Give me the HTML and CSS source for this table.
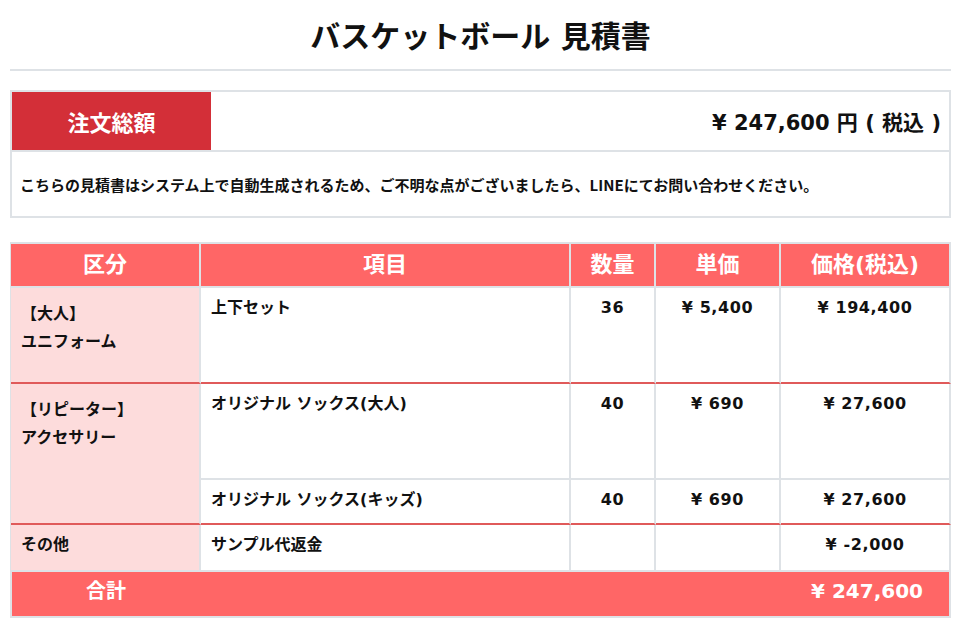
FILE: index.html
```html
<!DOCTYPE html>
<html lang="ja">
<head>
<meta charset="utf-8">
<title>バスケットボール 見積書</title>
<link rel="stylesheet" href="styles.css">
</head>
<body>
<div class="page">
  <h1 class="title">バスケットボール 見積書</h1>
  <div class="divider"></div>

  <div class="summary">
    <div class="summary-top">
      <div class="summary-label">注文総額</div>
      <div class="summary-amount">¥ 247,600 円 ( 税込 )</div>
    </div>
    <div class="summary-note">こちらの見積書はシステム上で自動生成されるため、ご不明な点がございましたら、LINEにてお問い合わせください。</div>
  </div>

  <table class="estimate">
    <thead>
      <tr>
        <th class="c-cat">区分</th>
        <th class="c-item">項目</th>
        <th class="c-qty">数量</th>
        <th class="c-unit">単価</th>
        <th class="c-price">価格(税込)</th>
      </tr>
    </thead>
    <tbody>
      <tr class="row-tall group-end">
        <td class="cat">【大人】<br>ユニフォーム</td>
        <td class="item">上下セット</td>
        <td class="num">36</td>
        <td class="num">¥ 5,400</td>
        <td class="num">¥ 194,400</td>
      </tr>
      <tr class="row-tall">
        <td class="cat cat-end" rowspan="2">【リピーター】<br>アクセサリー</td>
        <td class="item">オリジナル ソックス(大人)</td>
        <td class="num">40</td>
        <td class="num">¥ 690</td>
        <td class="num">¥ 27,600</td>
      </tr>
      <tr class="row-short group-end">
        <td class="item">オリジナル ソックス(キッズ)</td>
        <td class="num">40</td>
        <td class="num">¥ 690</td>
        <td class="num">¥ 27,600</td>
      </tr>
      <tr class="row-other">
        <td class="cat cat-single">その他</td>
        <td class="item">サンプル代返金</td>
        <td class="num"></td>
        <td class="num"></td>
        <td class="num">¥ -2,000</td>
      </tr>
    </tbody>
  </table>

  <div class="total">
    <div class="total-label">合計</div>
    <div class="total-amount">¥ 247,600</div>
  </div>
</div>
</body>
</html>
```

FILE: styles.css
```css
html, body {
  margin: 0;
  padding: 0;
  background: #ffffff;
}

body {
  color: #111111;
  font-family: "DejaVu Sans", "Noto Sans CJK JP", sans-serif;
  font-weight: 700;
}

.page {
  padding: 0 10px;
}

.title {
  margin: 0;
  padding-top: 17px;
  font-size: 30px;
  line-height: 40px;
  font-weight: 700;
  text-align: center;
}

.divider {
  margin-top: 12px;
  height: 2px;
  background: #dee2e6;
}

/* summary box */
.summary {
  margin-top: 19px;
  border: 2px solid #dee2e6;
}

.summary-top {
  display: flex;
  height: 58px;
}

.summary-label {
  width: 199px;
  display: flex;
  align-items: center;
  justify-content: center;
  background: #d32f38;
  color: #ffffff;
  font-size: 22px;
}

.summary-amount {
  flex: 1;
  display: flex;
  align-items: center;
  justify-content: flex-end;
  padding-right: 8px;
  font-size: 21px;
}

.summary-note {
  border-top: 2px solid #dee2e6;
  height: 64px;
  display: flex;
  align-items: center;
  padding: 0 8px;
  font-family: "Noto Sans CJK JP", "DejaVu Sans", sans-serif;
  font-size: 15px;
}

/* estimate table */
.estimate {
  margin-top: 24px;
  width: 941px;
  table-layout: fixed;
  border-collapse: separate;
  border-spacing: 0;
  border-top: 2px solid #dee2e6;
  border-left: 1px solid #dee2e6;
}

.estimate th,
.estimate td {
  box-sizing: border-box;
  border-right: 2px solid #dee2e6;
  border-bottom: 2px solid #dee2e6;
}

.estimate th {
  height: 44px;
  padding: 0;
  background: #ff6666;
  color: #ffffff;
  font-size: 22px;
  line-height: 24px;
  text-align: center;
  vertical-align: middle;
}

.c-cat { width: 190px; }
.c-item { width: 370px; }
.c-qty { width: 85px; }
.c-unit { width: 125px; }
.c-price { width: 170px; }

.estimate td {
  padding: 8px 10px 0;
  font-size: 16px;
  line-height: 24px;
  vertical-align: top;
  background: #ffffff;
}

.estimate td.cat {
  background: #fddcdc;
  padding-top: 12px;
  line-height: 28px;
}

.estimate td.cat-single {
  padding-top: 8px;
  line-height: 24px;
}

.estimate td.num {
  text-align: center;
  letter-spacing: 0.6px;
}

.row-tall > td { height: 96px; }
.row-short > td { height: 45px; }
.row-other > td { height: 47px; }

.group-end > td,
.estimate td.cat-end {
  border-bottom-color: #e05a5a;
}

/* total bar */
.total {
  display: flex;
  align-items: center;
  height: 46px;
  box-sizing: border-box;
  border: solid #dee2e6;
  border-width: 0 2px 2px 2px;
  background: #ff6666;
  color: #ffffff;
  font-size: 20px;
  line-height: 38px;
  padding-bottom: 6px;
}

.total-label {
  width: 188px;
  text-align: center;
}

.total-amount {
  margin-left: auto;
  padding-right: 26px;
}
```
